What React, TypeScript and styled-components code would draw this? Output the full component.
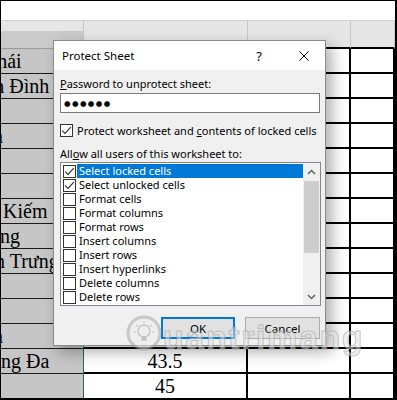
import React from "react";
import styled, { createGlobalStyle } from "styled-components";

const Global = createGlobalStyle`
  html, body { margin: 0; padding: 0; background: #fff; }
  body { width: 397px; height: 400px; overflow: hidden; }
`;

const Frame = styled.div`
  position: relative;
  width: 397px;
  height: 400px;
  box-sizing: border-box;
  border-style: solid;
  border-color: #000;
  border-width: 1px 2px 2px 1px;
  overflow: hidden;
  background: #fff;
  display: flex;
  flex-direction: column;
`;

const TopBand = styled.div`
  height: 25px;
  box-sizing: border-box;
  border-bottom: 1px solid #d2d2d2;
  background: #fff;
`;

const Sheet = styled.div`
  display: grid;
  grid-template-columns: 83px 164px 103px 1fr;
  grid-template-rows: 28px repeat(13, 25px) 1fr;
  flex: 1;
  font-family: "Liberation Serif", "Times New Roman", serif;
  font-size: 20px;
  color: #000;
`;

const HeadCell = styled.div<{ $first?: boolean }>`
  box-sizing: border-box;
  background: ${(p) =>
    p.$first ? "linear-gradient(#e6e6e6 0 10px, #cbcbcb 10px)" : "#e6e6e6"};
  border-right: 1px solid #c6c6c6;
  border-bottom: ${(p) => (p.$first ? "1px solid #9a9a9a" : "2px solid #000")};
`;

const Cell = styled.div<{ $kind: "gray" | "white"; $green?: boolean; $last?: boolean }>`
  box-sizing: border-box;
  overflow: hidden;
  white-space: nowrap;
  display: flex;
  align-items: center;
  line-height: 24px;
  background: ${(p) => (p.$kind === "gray" ? "#c6c6c6" : "#fff")};
  border-bottom: ${(p) =>
    p.$last ? "0" : p.$kind === "gray" ? "1px solid #1a1a1a" : "2px solid #000"};
  border-right: ${(p) =>
    p.$green ? "1px solid #1e7145" : p.$kind === "gray" ? "1px solid #1a1a1a" : "2px solid #000"};
`;

const CellText = styled.span<{ $shift: number }>`
  flex-shrink: 0;
  margin-left: ${(p) => p.$shift}px;
`;

const NumText = styled.span`
  flex: 1;
  text-align: center;
`;

const Dialog = styled.div`
  position: absolute;
  left: 52px;
  top: 39px;
  width: 273px;
  height: 306px;
  box-sizing: border-box;
  border: 1px solid #8a8a8a;
  background: #f0f0f0;
  box-shadow: 6px 6px 14px rgba(0, 0, 0, 0.32);
  display: flex;
  flex-direction: column;
  font-family: "Segoe UI", "Noto Sans", sans-serif;
  font-size: 11px;
  color: #000;
  z-index: 2;
`;

const TitleBar = styled.div`
  height: 29px;
  background: #fff;
  display: flex;
  align-items: center;
  padding-left: 8px;
  flex-shrink: 0;
`;

const Title = styled.div`
  flex: 1;
  font-size: 11.5px;
`;

const Help = styled.div`
  width: 12px;
  margin-right: 34px;
  text-align: center;
  font-size: 13px;
`;

const CloseIcon = styled.svg`
  width: 10px;
  height: 10px;
  margin-right: 16px;
  display: block;
`;

const Body = styled.div`
  flex: 1;
  display: flex;
  flex-direction: column;
  padding: 0 5px 0 6px;
`;

const Label = styled.div<{ $top: number }>`
  margin-top: ${(p) => p.$top}px;
  line-height: 16px;
  height: 16px;
  white-space: nowrap;
`;

const PasswordBox = styled.div`
  margin-top: 1px;
  height: 20px;
  box-sizing: border-box;
  border: 1px solid #7a7a7a;
  background: #fff;
  display: flex;
  align-items: center;
  padding-left: 3px;
  font-family: "DejaVu Sans", sans-serif;
  font-size: 7.5px;
  letter-spacing: 1.4px;
`;

const CheckRow = styled.label`
  margin-top: 9px;
  height: 16px;
  display: flex;
  align-items: center;
  gap: 4px;
  white-space: nowrap;
`;

const Box = styled.span<{ $compact?: boolean }>`
  width: 13px;
  height: 13px;
  box-sizing: border-box;
  border: 1px solid #333;
  background: #fff;
  flex-shrink: 0;
  display: flex;
  align-items: center;
  justify-content: center;
  margin-left: ${(p) => (p.$compact ? "2px" : "0")};
`;

const List = styled.div`
  height: 144px;
  box-sizing: border-box;
  border: 1px solid #828790;
  background: #fff;
  display: flex;
  margin-right: -1px;
`;

const Items = styled.div`
  flex: 1;
  padding-top: 1px;
  display: flex;
  flex-direction: column;
`;

const Item = styled.div`
  height: 14px;
  display: flex;
  align-items: center;
  gap: 1px;
`;

const ItemLabel = styled.span<{ $selected?: boolean }>`
  flex: 1;
  height: 14px;
  line-height: 14px;
  padding-left: 2px;
  background: ${(p) => (p.$selected ? "#0078d7" : "transparent")};
  color: ${(p) => (p.$selected ? "#fff" : "#000")};
  white-space: nowrap;
`;

const Scrollbar = styled.div`
  width: 17px;
  background: #f0f0f0;
  display: flex;
  flex-direction: column;
`;

const ArrowBtn = styled.div`
  height: 17px;
  display: flex;
  align-items: center;
  justify-content: center;
  flex-shrink: 0;
`;

const Thumb = styled.div`
  margin: 1px 1px 0;
  height: 72px;
  background: #cdcdcd;
`;

const Spacer = styled.div`
  flex: 1;
`;

const Buttons = styled.div`
  margin-top: 11px;
  display: flex;
  justify-content: flex-end;
  gap: 10px;
`;

const Button = styled.div<{ $default?: boolean }>`
  width: ${(p) => (p.$default ? "74px" : "75px")};
  height: 22px;
  box-sizing: border-box;
  background: #e1e1e1;
  border: ${(p) => (p.$default ? "2px solid #0078d7" : "1px solid #adadad")};
  display: flex;
  align-items: center;
  justify-content: center;
  font-size: 11.5px;
`;

const Watermark = styled.div`
  position: absolute;
  left: 124px;
  top: 312px;
  display: flex;
  align-items: flex-start;
  z-index: 3;
  pointer-events: none;
`;

const WatermarkText = styled.span`
  margin-top: 7px;
  font-family: "Liberation Sans", Arial, sans-serif;
  font-weight: 700;
  font-size: 34px;
  line-height: 34px;
  color: rgba(225, 225, 225, 0.55);
  -webkit-text-stroke: 1px rgba(140, 140, 140, 0.45);
  letter-spacing: 1.6px;
`;

const Check = () => (
  <svg width="11" height="11" viewBox="0 0 11 11">
    <polyline points="1.2,5.6 4,8.4 9.8,2.2" fill="none" stroke="#333" strokeWidth="1.2" />
  </svg>
);

const Chevron = ({ up }: { up?: boolean }) => (
  <svg width="9" height="6" viewBox="0 0 9 6">
    <polyline
      points={up ? "1,5 4.5,1.5 8,5" : "1,1 4.5,4.5 8,1"}
      fill="none"
      stroke="#606060"
      strokeWidth="1.5"
    />
  </svg>
);

type Row = { left?: string; shift?: number; num?: string };

const rows: Row[] = [
  { left: "Thái", shift: -16 },
  { left: "Văn Đình", shift: -30 },
  {},
  { left: "n", shift: -8 },
  {},
  {},
  { left: "n Kiếm", shift: -13 },
  { left: "ùng", shift: -11 },
  { left: "n Trưng", shift: -6 },
  {},
  {},
  { left: "n", shift: -8, num: "43.5" },
  { left: "ống Đa", shift: -10, num: "43.5" },
  { num: "45" },
];

const items = [
  "Select locked cells",
  "Select unlocked cells",
  "Format cells",
  "Format columns",
  "Format rows",
  "Insert columns",
  "Insert rows",
  "Insert hyperlinks",
  "Delete columns",
  "Delete rows",
];

export default function App() {
  return (
    <>
      <Global />
      <Frame>
        <TopBand />
        <Sheet>
          <HeadCell $first />
          <HeadCell />
          <HeadCell />
          <HeadCell />
          {rows.map((r, i) => {
            const last = i === rows.length - 1;
            const green = i >= 11;
            return (
              <React.Fragment key={i}>
                <Cell $kind="gray" $green={green} $last={last}>
                  {r.left && <CellText $shift={r.shift ?? 0}>{r.left}</CellText>}
                </Cell>
                <Cell $kind="white" $last={last}>
                  {r.num && <NumText>{r.num}</NumText>}
                </Cell>
                <Cell $kind="white" $last={last} />
                <Cell $kind="white" $last={last} />
              </React.Fragment>
            );
          })}
        </Sheet>

        <Dialog>
          <TitleBar>
            <Title>Protect Sheet</Title>
            <Help>?</Help>
            <CloseIcon viewBox="0 0 10 10">
              <line x1="0.5" y1="0.5" x2="9.5" y2="9.5" stroke="#000" strokeWidth="1" />
              <line x1="9.5" y1="0.5" x2="0.5" y2="9.5" stroke="#000" strokeWidth="1" />
            </CloseIcon>
          </TitleBar>
          <Body>
            <Label $top={6}>
              <u>P</u>assword to unprotect sheet:
            </Label>
            <PasswordBox>●●●●●●</PasswordBox>
            <CheckRow>
              <Box>
                <Check />
              </Box>
              <span>
                Protect worksheet and <u>c</u>ontents of locked cells
              </span>
            </CheckRow>
            <Label $top={8}>
              All<u>o</u>w all users of this worksheet to:
            </Label>
            <List>
              <Items>
                {items.map((t, i) => (
                  <Item key={t}>
                    <Box $compact>{i < 2 && <Check />}</Box>
                    <ItemLabel $selected={i === 0}>{t}</ItemLabel>
                  </Item>
                ))}
              </Items>
              <Scrollbar>
                <ArrowBtn>
                  <Chevron up />
                </ArrowBtn>
                <Thumb />
                <Spacer />
                <ArrowBtn>
                  <Chevron />
                </ArrowBtn>
              </Scrollbar>
            </List>
            <Buttons>
              <Button $default>OK</Button>
              <Button>Cancel</Button>
            </Buttons>
          </Body>
        </Dialog>

        <Watermark>
          <svg width="38" height="40" viewBox="0 0 38 40">
            <circle cx="19" cy="20" r="16" fill="rgba(235,235,235,0.5)" stroke="rgba(150,150,150,0.45)" strokeWidth="3" />
            <circle cx="19" cy="18" r="6" fill="none" stroke="rgba(160,160,160,0.55)" strokeWidth="1.5" />
            <rect x="16.5" y="24" width="5" height="4" fill="rgba(160,160,160,0.55)" />
            <g stroke="rgba(160,160,160,0.55)" strokeWidth="1.2">
              <line x1="19" y1="8" x2="19" y2="10" />
              <line x1="11" y1="12" x2="12.5" y2="13.5" />
              <line x1="27" y1="12" x2="25.5" y2="13.5" />
              <line x1="9" y1="19" x2="11" y2="19" />
              <line x1="29" y1="19" x2="27" y2="19" />
            </g>
          </svg>
          <WatermarkText>uantrimang</WatermarkText>
        </Watermark>
      </Frame>
    </>
  );
}
